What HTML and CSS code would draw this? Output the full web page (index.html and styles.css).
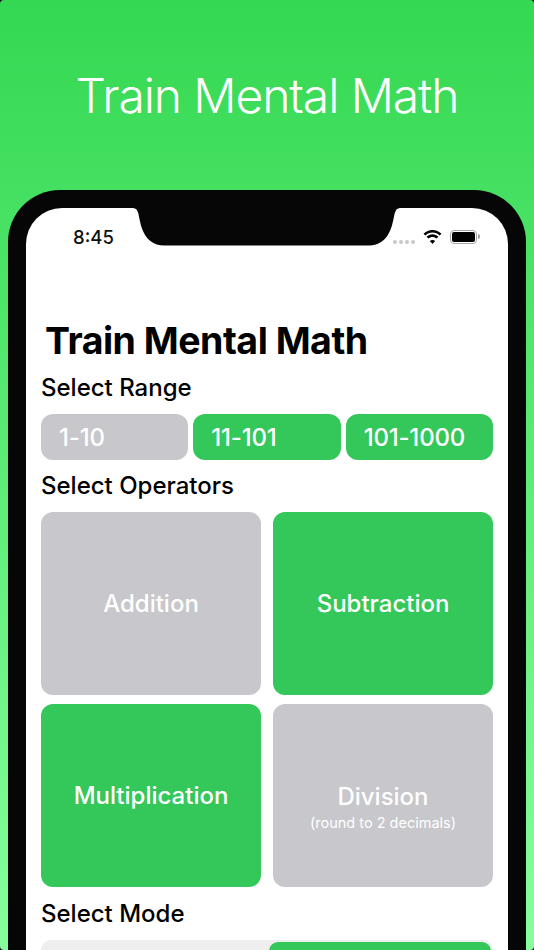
FILE: index.html
```html
<!DOCTYPE html>
<html lang="en">
<head>
    <meta charset="UTF-8">
    <title>Train Mental Math</title>
    <link rel="stylesheet" href="styles.css">
</head>
<body>
    <div class="screen">
        <h1 class="headline">Train Mental Math</h1>
        <div class="phone">
            <div class="display">
                <div class="status-bar">
                    <span class="time">8:45</span>
                    <svg class="notch" width="267" height="38" viewBox="0 0 267 38">
                        <path d="M0 0H267C264 0 262.500 2 261.500 6C259.500 16 257 37 236 37.500H31C10 37 7.500 16 5.500 6C4.500 2 3 0 0 0z"/>
                    </svg>
                    <div class="status-icons">
                        <span class="signal"><i></i><i></i><i></i><i></i></span>
                        <svg class="wifi" width="19" height="14" viewBox="0 0 19 14">
                            <path d="M9.500 2.600C12.300 2.600 14.800 3.700 16.700 5.500L18.500 3.700C16.100 1.400 13 0 9.500 0S2.900 1.400.5 3.700l1.800 1.800C4.200 3.700 6.700 2.600 9.500 2.600z"/>
                            <path d="M9.500 6.900c1.600 0 3 .6 4.100 1.600l1.800-1.800C13.800 5.200 11.800 4.300 9.500 4.300S5.200 5.200 3.600 6.700l1.800 1.800c1.100-1 2.500-1.600 4.100-1.600z"/>
                            <path d="M9.500 14l2.700-2.900c-.7-.6-1.700-1-2.700-1s-2 .4-2.700 1z"/>
                        </svg>
                        <span class="battery"><span class="battery-level"></span></span>
                        <span class="battery-cap"></span>
                    </div>
                </div>
                <div class="app">
                    <h2 class="app-title">Train Mental Math</h2>
                    <h3 class="section-title">Select Range</h3>
                    <div class="range-row">
                        <button class="range off">1-10</button>
                        <button class="range on">11-101</button>
                        <button class="range on">101-1000</button>
                    </div>
                    <h3 class="section-title">Select Operators</h3>
                    <div class="operator-grid">
                        <button class="operator off">Addition</button>
                        <button class="operator on">Subtraction</button>
                        <button class="operator on">Multiplication</button>
                        <button class="operator off with-note">Division<small>(round to 2 decimals)</small></button>
                    </div>
                    <h3 class="section-title">Select Mode</h3>
                    <div class="mode-row">
                        <div class="mode-selected"></div>
                    </div>
                </div>
            </div>
        </div>
    </div>
</body>
</html>
```

FILE: styles.css
```css
html, body {
    margin: 0;
    padding: 0;
}
body {
    width: 534px;
    height: 950px;
    overflow: hidden;
    background: #0a0a0a;
    font-family: Inter, "Liberation Sans", sans-serif;
}
.screen {
    width: 534px;
    height: 950px;
    overflow: hidden;
    border-radius: 4px;
    background: linear-gradient(to bottom, #34d852, #87ff9c);
}
.headline {
    margin: 0;
    padding-top: 67px;
    height: 190px;
    box-sizing: border-box;
    text-align: center;
    color: white;
    font-size: 48px;
    line-height: 58px;
    font-weight: 350;
    letter-spacing: -1.1px;
}
.phone {
    margin: 0 8px;
    padding: 18px 18px 0;
    height: 760px;
    background: #060606;
    border-radius: 52px 52px 0 0;
}
.display {
    height: 742px;
    background: white;
    border-radius: 36px 36px 0 0;
    overflow: hidden;
}
.status-bar {
    display: flex;
    height: 38px;
    position: relative;
}
.time {
    margin: 18px 0 0 47px;
    font-size: 18.5px;
    line-height: 22px;
    font-weight: 500;
    color: #111;
}
.notch {
    position: absolute;
    left: 107px;
    top: 0;
    fill: #060606;
}
.status-icons {
    position: absolute;
    right: 28px;
    top: 21px;
    display: flex;
    align-items: center;
}
.signal {
    display: flex;
    gap: 2px;
    margin: 11px 8px 0 0;
}
.signal i {
    width: 4px;
    height: 4px;
    border-radius: 50%;
    background: #c8c8c8;
}
.battery {
    width: 27px;
    height: 14px;
    box-sizing: border-box;
    border: 1px solid #a5a5a5;
    border-radius: 4px;
    padding: 1px;
    display: flex;
    margin-left: 8px;
}
.battery-level {
    flex: 1;
    background: black;
    border-radius: 2px;
}
.battery-cap {
    width: 2px;
    height: 5px;
    margin-left: 1px;
    background: #a5a5a5;
    border-radius: 0 2px 2px 0;
}
.app {
    padding: 72px 15px 0;
}
.app-title {
    margin: 0 0 10px 4px;
    font-size: 37.5px;
    line-height: 45px;
    font-weight: 700;
    letter-spacing: -0.5px;
    color: #000;
}
.section-title {
    margin: 0;
    font-size: 24px;
    line-height: 29px;
    font-weight: 500;
    color: #000;
}
.range-row {
    display: flex;
    gap: 5px;
    margin: 12px 0 11px;
}
.range {
    flex: 1;
    height: 46px;
    border: none;
    border-radius: 12px;
    padding: 0 18px;
    text-align: left;
    font-family: inherit;
    font-size: 24px;
    font-weight: 500;
    letter-spacing: -0.2px;
    color: white;
}
.off {
    background: #c7c7cc;
}
.on {
    background: #34c85a;
}
.operator-grid {
    display: grid;
    grid-template-columns: 1fr 1fr;
    grid-auto-rows: 183px;
    gap: 9px 12px;
    margin: 12px 0;
}
.operator {
    border: none;
    border-radius: 12px;
    padding: 0;
    font-family: inherit;
    font-size: 24px;
    font-weight: 500;
    color: white;
}
.with-note {
    padding-top: 23px;
}
.operator small {
    display: block;
    font-size: 14.5px;
    line-height: 18px;
    font-weight: 400;
    margin-top: 3px;
}
.mode-row {
    margin-top: 12px;
    height: 46px;
    background: #eeeeef;
    border-radius: 10px;
    padding: 2px;
    display: flex;
    justify-content: flex-end;
}
.mode-selected {
    width: 222px;
    background: #34c85a;
    border-radius: 9px;
}
```
